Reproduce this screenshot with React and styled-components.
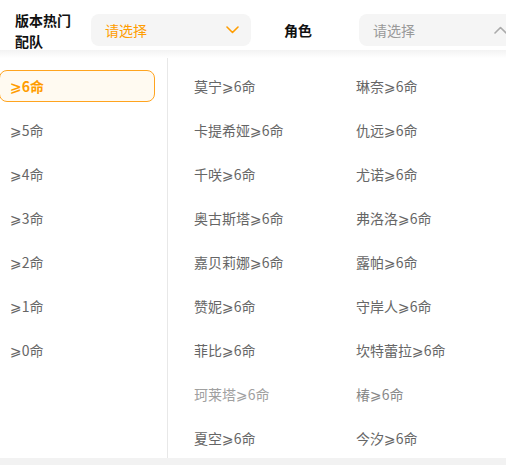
import styled, { createGlobalStyle } from 'styled-components';

const GlobalStyle = createGlobalStyle`
  html, body {
    margin: 0;
    padding: 0;
    background: #ffffff;
    overflow: hidden;
  }
  body {
    font-family: 'Noto Sans CJK SC', 'DejaVu Sans', sans-serif;
  }
`;

const levels = ['⩾6命', '⩾5命', '⩾4命', '⩾3命', '⩾2命', '⩾1命', '⩾0命'];

const teams = [
  { name: '莫宁⩾6命' },
  { name: '琳奈⩾6命' },
  { name: '卡提希娅⩾6命' },
  { name: '仇远⩾6命' },
  { name: '千咲⩾6命' },
  { name: '尤诺⩾6命' },
  { name: '奥古斯塔⩾6命' },
  { name: '弗洛洛⩾6命' },
  { name: '嘉贝莉娜⩾6命' },
  { name: '露帕⩾6命' },
  { name: '赞妮⩾6命' },
  { name: '守岸人⩾6命' },
  { name: '菲比⩾6命' },
  { name: '坎特蕾拉⩾6命' },
  { name: '珂莱塔⩾6命', tone: 'faint' },
  { name: '椿⩾6命', tone: 'soft' },
  { name: '夏空⩾6命' },
  { name: '今汐⩾6命' },
];

function Chevron({ up, color }) {
  return (
    <svg width="13" height="8" viewBox="0 0 13 8" fill="none">
      <path
        d={up ? 'M1 7 L6.5 1.5 L12 7' : 'M1 1 L6.5 6.5 L12 1'}
        stroke={color}
        strokeWidth="1.6"
        strokeLinecap="round"
        strokeLinejoin="round"
      />
    </svg>
  );
}

export default function App() {
  return (
    <>
      <GlobalStyle />
      <Page>
        <Header>
          <Field $gap={20}>
            <Label>
              版本热门
              <br />
              配队
            </Label>
            <Select $active>
              <span>请选择</span>
              <Chevron color="#ff9d00" />
            </Select>
          </Field>
          <Field $gap={33}>
            <Label $center>角色</Label>
            <Select>
              <span>请选择</span>
              <Chevron up color="#aaaaaa" />
            </Select>
          </Field>
        </Header>
        <Body>
          <LevelList>
            {levels.map((level, i) => (
              <LevelItem key={level} $selected={i === 0}>
                {level}
              </LevelItem>
            ))}
          </LevelList>
          <TeamGrid>
            {teams.map((team) => (
              <TeamItem key={team.name} $tone={team.tone}>
                {team.name}
              </TeamItem>
            ))}
          </TeamGrid>
        </Body>
        <Footer />
      </Page>
    </>
  );
}

const Page = styled.div`
  width: 506px;
  height: 465px;
  display: flex;
  flex-direction: column;
  overflow: hidden;
`;

const Header = styled.div`
  height: 58px;
  flex-shrink: 0;
  box-sizing: border-box;
  padding: 2px 0 0 15px;
  display: flex;
  align-items: center;
  gap: 19px;
  white-space: nowrap;
  background: linear-gradient(
    to bottom,
    #ffffff 0,
    #ffffff 50px,
    #f3f3f3 50px,
    #ffffff 58px
  );
`;

const Field = styled.div`
  display: flex;
  align-items: center;
  gap: ${(p) => p.$gap}px;
`;

const Label = styled.div`
  width: 56px;
  font-size: 14px;
  line-height: 21px;
  font-weight: 700;
  color: #111111;
  text-align: ${(p) => (p.$center ? 'center' : 'left')};
  margin-top: ${(p) => (p.$center ? '0' : '2px')};
`;

const Select = styled.div`
  width: 160px;
  height: 32px;
  flex-shrink: 0;
  box-sizing: border-box;
  display: flex;
  align-items: center;
  justify-content: space-between;
  padding: 0 12px 0 14px;
  border-radius: 8px;
  background: #f5f5f5;
  font-size: 14px;
  color: ${(p) => (p.$active ? '#ff9d00' : '#999999')};
`;

const Body = styled.div`
  flex: 1;
  display: flex;
  min-height: 0;
`;

const LevelList = styled.div`
  width: 168px;
  flex-shrink: 0;
  box-sizing: border-box;
  border-right: 1px solid #e8e8e8;
  padding: 6px 12px 0 0;
  display: flex;
  flex-direction: column;
`;

const LevelItem = styled.div`
  height: 32px;
  margin: 6px 0 6px -1px;
  box-sizing: border-box;
  display: flex;
  align-items: center;
  padding-left: 10px;
  font-size: 14px;
  border-radius: 8px;
  border: 1px solid ${(p) => (p.$selected ? '#ffa41f' : 'transparent')};
  background: ${(p) => (p.$selected ? '#fffaf1' : 'transparent')};
  color: ${(p) => (p.$selected ? '#ff9d00' : '#666666')};
  font-weight: ${(p) => (p.$selected ? 700 : 400)};
`;

const TeamGrid = styled.div`
  flex: 1;
  padding: 6px 0 0 26px;
  display: grid;
  grid-template-columns: 162px 1fr;
  grid-auto-rows: 44px;
  align-content: start;
`;

const toneColors = {
  faint: '#a0a0a0',
  soft: '#888888',
};

const TeamItem = styled.div`
  display: flex;
  align-items: center;
  font-size: 14px;
  color: ${(p) => toneColors[p.$tone] || '#666666'};
  white-space: nowrap;
`;

const Footer = styled.div`
  height: 7px;
  flex-shrink: 0;
  background: #f2f2f2;
`;
